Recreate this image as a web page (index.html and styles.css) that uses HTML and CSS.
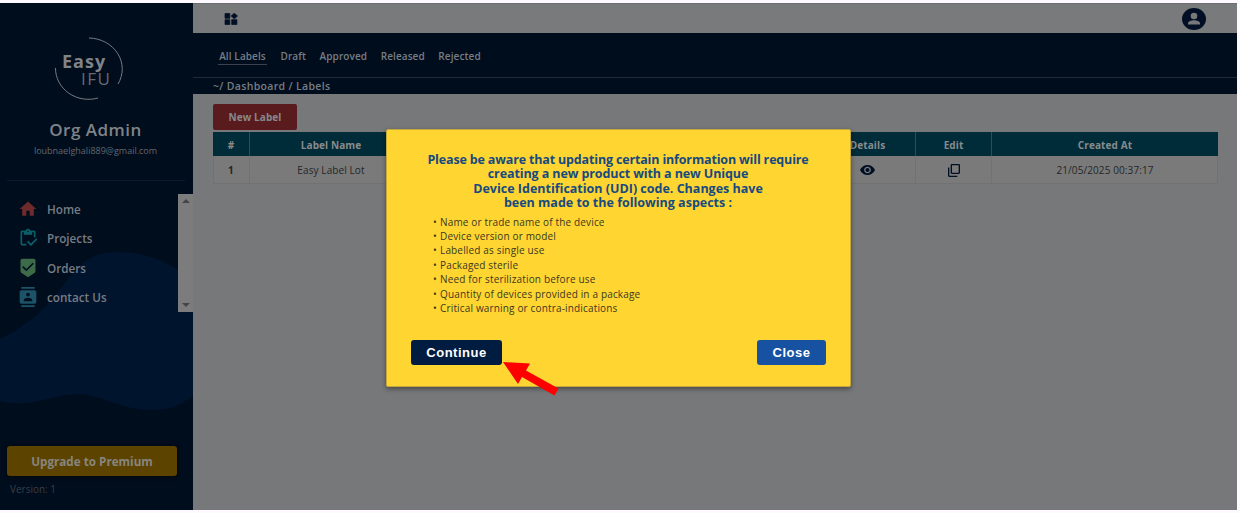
FILE: index.html
```html
<!DOCTYPE html>
<html lang="en">
<head>
<meta charset="utf-8">
<title>Labels</title>
<link rel="stylesheet" href="styles.css">
</head>
<body>
<div class="app">
  <aside class="sidebar">
    <svg class="wave" viewBox="0 0 193 170" width="193" height="170"><path d="M0 97C28 83 45 68 62 45C82 17 94 10 119 10C147 10 173 22 193 38V154C178 165 166 168 151 168C120 168 101 152 77 152C54 152 28 167 0 159Z"/></svg>
    <div class="logo">
      <svg viewBox="0 0 72 66" width="72" height="66"><path d="M35 2A34 31 0 0 1 64 48M1.500 32A33 31 0 0 0 44 62"/></svg>
      <b class="logo-easy">Easy</b><span class="logo-ifu">IFU</span>
    </div>
    <h1 class="role"><span>Org Admin</span></h1>
    <p class="mail"><span>loubnaelghali889@gmail.com</span></p>
    <div class="menu">
      <nav class="links">
        <a><svg viewBox="0 0 24 24" width="20" height="20" fill="#6f2a2c"><path d="M10 20v-6h4v6h5v-8h3L12 3 2 12h3v8z"/></svg><span>Home</span></a>
        <a><svg viewBox="0 0 24 24" width="20" height="20" fill="#0b5f68"><path d="M5 5h2v3h10V5h2v6h2V5c0-1.100-.9-2-2-2h-4.180C14.400 1.840 13.300 1 12 1S9.600 1.840 9.180 3H5c-1.100 0-2 .9-2 2v14c0 1.100.9 2 2 2h5v-2H5V5zm7-2c.55 0 1 .45 1 1s-.45 1-1 1-1-.45-1-1 .45-1 1-1z"/><path d="M21.750 12.250 15.510 18.500l-3.260-3.250-1.500 1.500 4.760 4.750 7.740-7.750z"/></svg><span>Projects</span></a>
        <a><svg viewBox="0 0 24 24" width="20" height="20" fill="#3c6b49"><path d="M19 1H5c-1.100 0-2 .9-2 2v12.930c0 .69.350 1.300.88 1.660L12 23l8.110-5.410c.53-.36.88-.97.88-1.660L21 3c0-1.100-.9-2-2-2zm-9 15-5-5 1.410-1.410L10 13.170l7.590-7.590L19 7l-9 9z"/></svg><span>Orders</span></a>
        <a><svg viewBox="0 0 24 24" width="20" height="20" fill="#1c5368"><path d="M20 0H4v2h16V0zM4 24h16v-2H4v2zM20 4H4c-1.100 0-2 .9-2 2v12c0 1.100.9 2 2 2h16c1.100 0 2-.9 2-2V6c0-1.100-.9-2-2-2zm-8 2.750c1.240 0 2.250 1.010 2.250 2.250s-1.010 2.250-2.250 2.250S9.750 10.240 9.750 9 10.760 6.750 12 6.750zM17 17H7v-1.500c0-1.670 3.330-2.500 5-2.500s5 .83 5 2.500V17z"/></svg><span>contact Us</span></a>
      </nav>
      <div class="scroll"><i class="up"></i><i class="down"></i></div>
    </div>
    <button class="upgrade"><span>Upgrade to Premium</span></button>
    <p class="version"><span>Version: 1</span></p>
  </aside>
  <main class="main">
    <header class="topbar">
      <svg viewBox="0 0 14 12" width="14" height="12"><path d="M1 .5h4.800v4.800H1zM1 6.700h4.800v4.800H1zM7.700 6.700h5.200v4.800H7.700zM10.300 .2l3.200 2.800-3.200 2.800-3.200-2.800z" stroke-linejoin="round" stroke="#000f24" stroke-width=".7"/></svg>
      <svg class="avatar" viewBox="0 0 24 22" width="24" height="22"><ellipse cx="12" cy="11" rx="12" ry="11"/><g fill="#777879"><circle cx="12" cy="8" r="3.300"/><path d="M6 16.500v-1.300c0-2 3.500-3 6-3s6 1 6 3v1.300z"/></g></svg>
    </header>
    <nav class="tabs"><a class="active">All Labels</a><a>Draft</a><a>Approved</a><a>Released</a><a>Rejected</a></nav>
    <div class="crumbs"><span>~/ Dashboard / Labels</span></div>
    <section class="content">
      <button class="new"><span>New Label</span></button>
      <div class="table">
        <div class="row head"><b>#</b><b>Label Name</b><b></b><b>Details</b><b>Edit</b><b>Created At</b></div>
        <div class="row body"><b>1</b><span>Easy Label Lot</span><span></span>
          <span><svg viewBox="1 4.500 22 15" width="15" height="10" preserveAspectRatio="none"><path d="M12 4.500C7 4.500 2.730 7.610 1 12c1.730 4.390 6 7.500 11 7.500s9.270-3.110 11-7.500c-1.730-4.390-6-7.500-11-7.500zM12 17c-2.760 0-5-2.240-5-5s2.240-5 5-5 5 2.240 5 5-2.240 5-5 5zm0-8c-1.660 0-3 1.340-3 3s1.340 3 3 3 3-1.340 3-3-1.340-3-3-3z"/></svg></span>
          <span class="c-edit"><svg viewBox="3 1 18 22" width="12" height="13" preserveAspectRatio="none"><path d="M19 1H9c-1.100 0-2 .9-2 2v13c0 1.100.9 2 2 2h10c1.100 0 2-.9 2-2V3c0-1.100-.9-2-2-2zm0 15H9V3h10zM3 7v14c0 1.100.9 2 2 2h12v-2H5V7z"/></svg></span>
          <span>21/05/2025 00:37:17</span></div>
      </div>
    </section>
  </main>
</div>
<div class="dialog">
  <h2><span class="d1">Please be aware that updating certain information will require</span><span class="d2">creating a new product with a new Unique</span><span>Device Identification (UDI) code. Changes have</span><span>been made to the following aspects :</span></h2>
  <ul><li>Name or trade name of the device</li><li>Device version or model</li><li>Labelled as single use</li><li>Packaged sterile</li><li>Need for sterilization before use</li><li>Quantity of devices provided in a package</li><li>Critical warning or contra-indications</li></ul>
  <div class="actions"><button class="continue">Continue</button><button class="close">Close</button></div>
</div>
<svg class="arrow" viewBox="0 0 56 36" width="56" height="36"><path d="M0 1 27 2.500 23 9.500 55.500 27.500 51.500 34.500 19 16 15 23z"/></svg>
</body>
</html>
```

FILE: styles.css
```css
* { box-sizing: border-box; }
body { margin: 0; height: 513px; padding-top: 3px; overflow: hidden; background: #fdf9ff; font-family: "Open Sans", "Noto Sans", sans-serif; font-size: 10px; position: relative; }
h1, h2, p, ul { margin: 0; padding: 0; }
button { border: 0; padding: 0; font-family: inherit; }
svg { display: block; flex: none; }
span, a, b, li { white-space: nowrap; }
.app { width: 1237px; height: 507px; display: flex; background: #777879; }
.sidebar { width: 193px; flex: none; background: #000d1d; color: #808388; position: relative; display: flex; flex-direction: column; z-index: 0; }
.wave { position: absolute; left: 0; top: 239px; z-index: -1; fill: #00142e; }
.logo { width: 72px; height: 66px; margin: 33px 0 0 54px; position: relative; }
.logo path { fill: none; stroke: #777b80; stroke-width: 1; }
.logo-easy { position: absolute; left: 8px; top: 12px; font: bold 18px/26px "Open Sans", sans-serif; letter-spacing: 1px; }
.logo-ifu { position: absolute; left: 27px; top: 31px; font: 400 17px/24px "Open Sans", sans-serif; letter-spacing: 1.500px; color: #666a70; }
.role { margin-top: 17px; height: 22px; line-height: 22px; font-size: 17px; font-weight: 600; text-align: center; padding-right: 2px; letter-spacing: .5px; }
.mail { height: 16px; margin-top: 2px; line-height: 16px; font-size: 9px; text-align: center; padding-right: 2px; color: #63686e; }
.menu { margin-top: 35px; height: 118px; display: flex; justify-content: space-between; position: relative; }
.menu::before { content: ""; position: absolute; left: 7px; top: -14px; width: 178px; height: 1px; background: #0a1b2e; }
.links { padding: 0 0 0 18px; }
.links a { display: flex; align-items: center; gap: 9px; height: 29.500px; font-size: 11.700px; font-weight: 600; color: #777c83; }
.scroll { width: 15px; background: #7c7c7c; display: flex; flex-direction: column; justify-content: space-between; align-items: center; padding: 5px 0; }
.scroll i { border: 4px solid transparent; }
.scroll .up { border-top: 0; border-bottom-color: #454545; }
.scroll .down { border-bottom: 0; border-top-color: #454545; }
.upgrade { margin: 134px 0 0 7px; width: 170px; height: 30px; border-radius: 3px; background: #5d4300; color: #87857f; font-size: 11.700px; font-weight: 700; box-shadow: 0 1px 4px #0009; }
.version { margin: 5px 0 0 10px; line-height: 16px; font-size: 10px; color: #393f47; }
.main { flex: 1; min-width: 0; }
.topbar { height: 30px; padding: 0 31px 0 31px; display: flex; align-items: center; justify-content: space-between; background: #797a7b; border-top: 1px solid #6c6d6e; fill: #000f24; }
.tabs { height: 45px; background: #000d1d; border-bottom: 1px solid #20293a; display: flex; gap: 13.500px; padding: 14px 0 0 25px; color: #787d84; font-size: 10px; font-weight: 600; line-height: 18px; letter-spacing: .1px; }
.tabs a { height: 18px; }
.active { width: 49px; border-bottom: 1px solid #3b424d; display: flex; justify-content: center; }
.crumbs { height: 16px; line-height: 16px; background: #000d1d; color: #787d84; padding-left: 20px; font-size: 10.500px; font-weight: 600; letter-spacing: .33px; }
.content { padding: 10px 19px 0 20px; }
.new { display: block; width: 84px; height: 26px; border-radius: 2px; background: #591b1e; color: #87898b; font-size: 10px; font-weight: 700; letter-spacing: .1px; }
.table { margin-top: 2px; }
.row { display: grid; grid-template-columns: 37px 163px 407px 96px 76px 1fr; }
.row > * { display: flex; align-items: center; justify-content: center; border-right: 1px solid #717273; }
.head { height: 24px; background: #002c39; color: #888b8d; letter-spacing: .1px; }
.head > * { border-color: #2c4c56; padding-top: 1px; }
.row > :last-child { border-right: 0; }
.body { height: 28px; background: #7a7a7a; color: #252627; border-bottom: 1px solid #717273; box-shadow: inset 1px 0 #717273, inset -1px 0 #717273; fill: #000f24; letter-spacing: .1px; }
.c-edit { padding-top: 2px; }
.dialog { position: absolute; left: 386px; top: 129px; width: 465px; height: 258px; background: #ffd531; border: 1px solid #c5a83a; border-radius: 2px; box-shadow: 0 2px 5px #0006; padding: 23px 24px 0 23px; }
.dialog h2 { color: #174a80; font-size: 12.500px; line-height: 14.400px; font-weight: 700; display: flex; flex-direction: column; align-items: center; }
.d1 { letter-spacing: -.16px; }
.d2 { letter-spacing: -.1px; }
.dialog ul { list-style: none; margin-top: 4px; padding-left: 30px; color: #3b3821; font-size: 10px; line-height: 14.400px; letter-spacing: .16px; }
.dialog li::before { content: "•"; display: inline-block; width: 7px; margin-left: -7px; letter-spacing: 0; }
.actions { display: flex; justify-content: space-between; margin-top: 25px; padding-left: 1px; }
.actions button { height: 25px; border-radius: 3px; color: #fff; font: bold 13px "Liberation Sans", Arial, sans-serif; letter-spacing: .5px; }
.continue { width: 91px; background: #001c40; }
.close { width: 69px; background: #1751a2; }
.arrow { position: absolute; left: 503px; top: 361px; fill: #f00; }
```
